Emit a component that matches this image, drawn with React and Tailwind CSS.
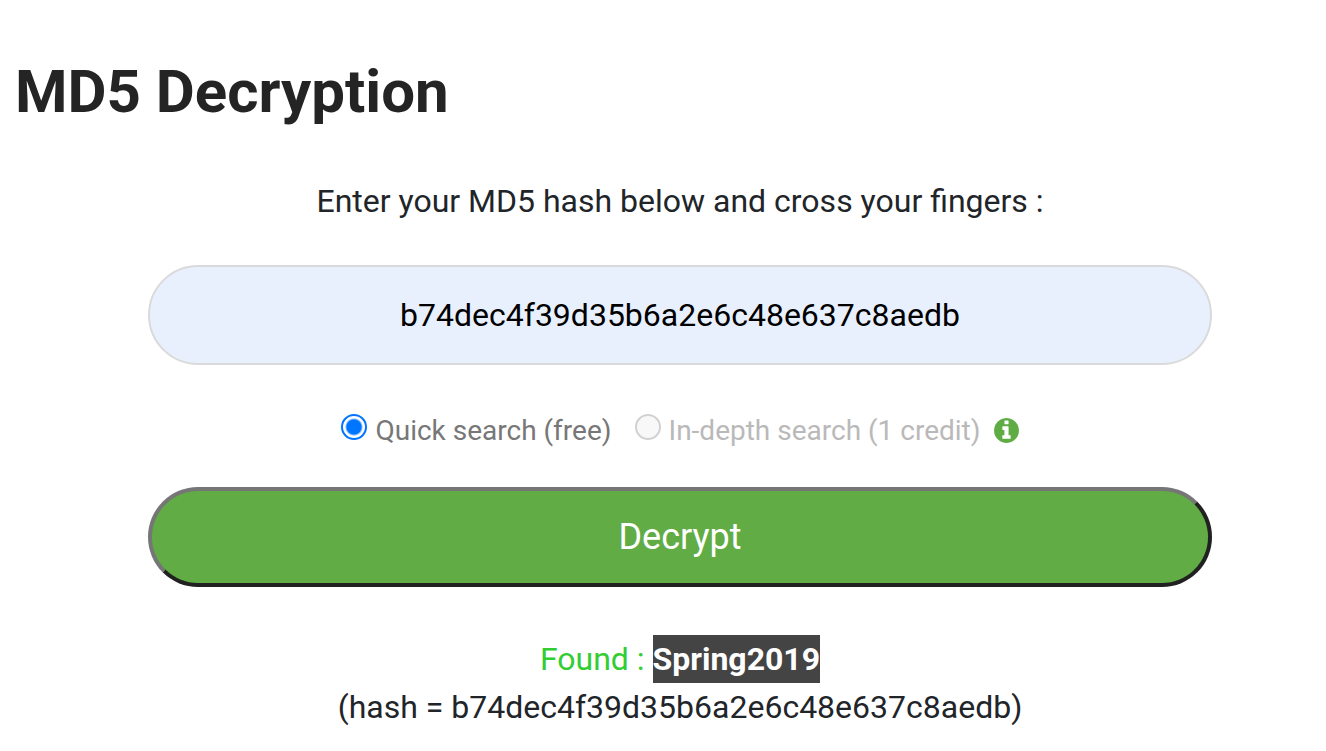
const radioClass =
  "mb-2 mr-2 size-[26px] shrink-0 appearance-none rounded-full border-2 border-[#767676] bg-white bg-clip-padding checked:border-[#0075ff] checked:bg-[radial-gradient(circle,#0075ff_7px,#ffffff_9px)] disabled:border-[#d1d1d1] disabled:bg-[#f8f8f8]";

function InfoIcon() {
  return (
    <svg viewBox="128 128 1536 1536" className="mb-0.5 ml-[13px] size-[25px] shrink-0" fill="#5fac44" aria-hidden="true">
      <path d="M1152 1376v-160q0-14-9-23t-23-9h-96v-512q0-14-9-23t-23-9h-320q-14 0-23 9t-9 23v160q0 14 9 23t23 9h96v320h-96q-14 0-23 9t-9 23v160q0 14 9 23t23 9h448q14 0 23-9t9-23zM1024 480v-160q0-14-9-23t-23-9h-192q-14 0-23 9t-9 23v160q0 14 9 23t23 9h192q14 0 23-9t9-23zM1664 896q0 209-103 385.5t-279.5 279.5-385.5 103-385.5-103-279.5-279.5-103-385.5 103-385.5 279.5-279.5 385.5-103 385.5 103 279.5 279.5 103 385.5z" />
    </svg>
  );
}

export default function App() {
  return (
    <main className="min-h-screen bg-white pl-[15px] pt-[51px] font-[Roboto,sans-serif] text-[32px] leading-[48px] text-[#212529]">
      <h1 className="text-[60px] font-bold leading-[82px] text-[#242424]">MD5 Decryption</h1>
      <form className="mr-[-19px] pt-11 text-center" onSubmit={(e) => e.preventDefault()}>
        <div className="mx-auto w-[1064px] max-w-full">
          <label htmlFor="hash" className="block">Enter your MD5 hash below and cross your fingers :</label>
          <input
            id="hash"
            type="text"
            defaultValue="b74dec4f39d35b6a2e6c48e637c8aedb"
            className="mt-10 block h-[100px] w-full rounded-full border-2 border-[#dadada] bg-[#e8f0fe] text-center text-black"
          />
          <div className="mt-[42px] flex h-12 items-center justify-center text-[28px] text-[#777777]">
            <input id="quick" type="radio" name="mode" defaultChecked className={radioClass} />
            <label htmlFor="quick" className="mr-[23px]">Quick search (free)</label>
            <input id="deep" type="radio" name="mode" disabled className={radioClass} />
            <label htmlFor="deep" className="text-[#b9b9b9]">In-depth search (1 credit)</label>
            <InfoIcon />
          </div>
          <button type="submit" className="mt-8 block h-[100px] w-full rounded-full border-4 border-[#212121] border-l-[#767676] border-t-[#767676] bg-[#61ac45] text-[36px] text-white">
            Decrypt
          </button>
          <p className="mt-12">
            <span className="text-[#32cd32]">Found : </span>
            <strong className="inline-block bg-[#444444] font-bold text-white">Spring2019</strong>
            <br />
            (hash = b74dec4f39d35b6a2e6c48e637c8aedb)
          </p>
        </div>
      </form>
    </main>
  );
}
